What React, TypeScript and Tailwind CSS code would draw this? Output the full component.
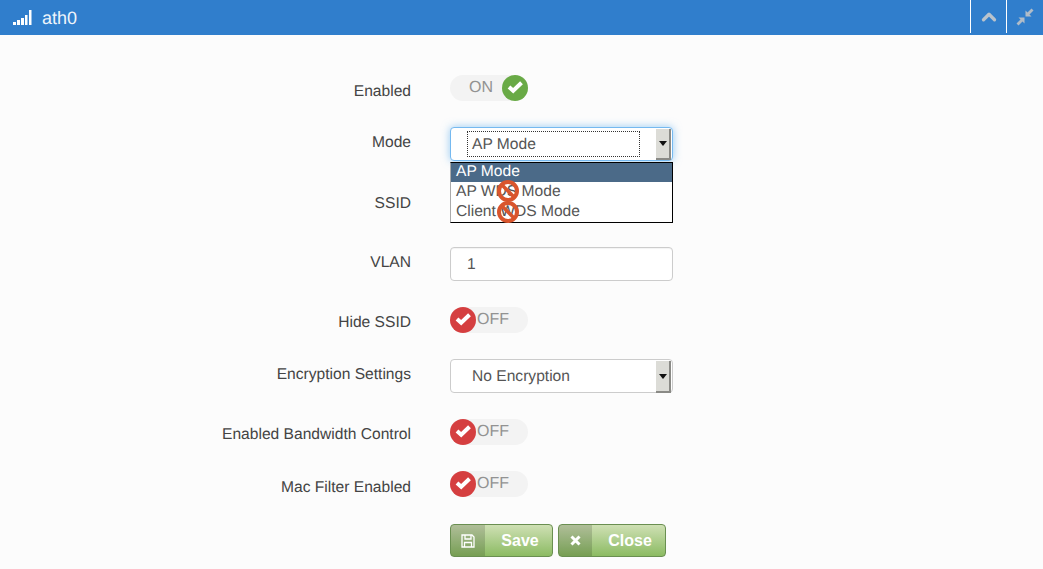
import { ChevronUp } from "lucide-react";
import type { ReactNode } from "react";

const Check = () => (
  <svg width="18" height="15" viewBox="0 0 18 15" className="-mt-[2px]">
    <path d="M3 7 L7.2 10.8 L15.5 2.8" fill="none" stroke="#fff" strokeWidth="4" strokeLinejoin="miter" />
  </svg>
);

function Toggle({ on }: { on: boolean }) {
  return (
    <div className={`flex h-[26px] w-[78px] items-center rounded-[13px] bg-[#f3f3f3] text-[16px] text-[#929292] ${on ? "justify-end" : ""}`}>
      {on ? (
        <>
          <span className="mr-[9px] -mt-px">ON</span>
          <span className="flex h-[26px] w-[26px] items-center justify-center rounded-full bg-[#69aa46]">
            <Check />
          </span>
        </>
      ) : (
        <>
          <span className="flex h-[26px] w-[26px] items-center justify-center rounded-full bg-[#d53f40]">
            <Check />
          </span>
          <span className="ml-px">OFF</span>
        </>
      )}
    </div>
  );
}

function Row({ label, labelShift, h, mb, children }: { label: string; labelShift: string; h: string; mb: string; children: ReactNode }) {
  return (
    <div className={`flex ${h} ${mb}`}>
      <div className={`w-[411px] text-right text-[15.6px] leading-[20px] text-[#444] ${labelShift}`}>{label}</div>
      <div className="ml-[39px]">{children}</div>
    </div>
  );
}

function SelectArrow({ focused }: { focused?: boolean }) {
  return (
    <div className={`absolute right-px top-px flex w-[15px] items-center justify-center border-r-2 border-b-2 border-[#8a8a86] bg-[#dcdcd7] ${focused ? "h-[31px]" : "h-[32px]"}`}>
      <svg width="8" height="5" viewBox="0 0 8 5">
        <path d="M0 0 H8 L4 5 Z" fill="#111" />
      </svg>
    </div>
  );
}

const NotAllowed = ({ top }: { top: string }) => (
  <svg width="24" height="24" viewBox="0 0 24 24" className={`absolute left-[45px] ${top}`}>
    <circle cx="12" cy="12" r="9" fill="none" stroke="#d9552d" strokeWidth="4" />
    <path d="M5.5 5.5 L18.5 18.5" stroke="#d9552d" strokeWidth="3.6" />
  </svg>
);

function GreenButton({ w, iconW, label, icon }: { w: string; iconW: string; label: string; icon: ReactNode }) {
  return (
    <button className={`flex h-[33px] ${w} overflow-hidden rounded-[4px] border border-[#6a8f51] bg-gradient-to-b from-[#cfe0b4] to-[#8cbb62] text-[16px] font-bold text-white`}>
      <span className={`flex h-full ${iconW} items-center justify-center bg-[#000]/15`}>{icon}</span>
      <span className="flex h-full flex-1 items-center justify-center pl-[3px]">{label}</span>
    </button>
  );
}

export default function App() {
  return (
    <div className="h-[569px] w-[1043px] overflow-hidden bg-[#fcfcfc] font-['Liberation_Sans',Arial,sans-serif] [text-rendering:geometricPrecision]">
      <div className="flex h-[35px] items-center bg-[#307ecc] text-white">
        <svg width="20" height="16" viewBox="0 0 20 16" className="ml-[13px] mt-px">
          <g fill="#fff">
            <rect x="0" y="12" width="3" height="3" />
            <rect x="4" y="10" width="3" height="5" />
            <rect x="8" y="8" width="3" height="7" />
            <rect x="12" y="5" width="2.5" height="10" />
            <rect x="16" y="0" width="2.5" height="15" />
          </g>
        </svg>
        <span className="ml-[9px] mt-px text-[18px] text-[#eef4fb]">ath0</span>
        <div className="ml-auto flex h-full items-start">
          <div className="flex h-[33px] w-[36px] items-center justify-center border-l border-white">
            <ChevronUp size={22} strokeWidth={3.6} color="#b9c3cc" />
          </div>
          <div className="flex h-[33px] w-[37px] items-center justify-center border-l border-white">
            <svg width="18" height="18" viewBox="0 0 18 18" fill="#b0bcc8">
              <path d="M15.5 0.5 L17.5 2.5 L13.5 6.5 L15.5 8.5 L9.5 8.5 L9.5 2.5 L11.5 4.5 Z" />
              <path d="M2.5 17.5 L0.5 15.5 L4.5 11.5 L2.5 9.5 L8.5 9.5 L8.5 15.5 L6.5 13.5 Z" />
            </svg>
          </div>
        </div>
      </div>

      <div className="relative pt-[40px]">
        <Row label="Enabled" labelShift="pt-[7px]" h="h-[26px]" mb="mb-[26px]">
          <Toggle on />
        </Row>
        <Row label="Mode" labelShift="pt-[6px]" h="h-[34px]" mb="mb-[26px]">
          <div className="relative h-[34px] w-[223px] rounded-[4px] border border-[#75b9f0] bg-white text-[15.6px] leading-[20px] text-[#555] shadow-[0_0_8px_rgba(82,168,236,0.6)]">
            <div className="ml-[16px] mt-[3px] h-[26px] w-[173px] border border-dotted border-[#333] pl-[4px] pt-[3px]">AP Mode</div>
            <SelectArrow focused />
          </div>
        </Row>
        <Row label="SSID" labelShift="pt-[7px]" h="h-[34px]" mb="mb-[26px]">
          <div className="h-[34px] w-[223px]" />
        </Row>
        <Row label="VLAN" labelShift="pt-[6px]" h="h-[34px]" mb="mb-[26px]">
          <div className="h-[34px] w-[223px] rounded-[4px] border border-[#cccccc] bg-white pl-[16px] pt-[7px] text-[15.6px] leading-[20px] text-[#555] shadow-[inset_0_1px_1px_rgba(0,0,0,0.05)]">1</div>
        </Row>
        <Row label="Hide SSID" labelShift="pt-[6px]" h="h-[26px]" mb="mb-[26px]">
          <Toggle on={false} />
        </Row>
        <Row label="Encryption Settings" labelShift="pt-[6px]" h="h-[34px]" mb="mb-[26px]">
          <div className="relative h-[34px] w-[223px] rounded-[4px] border border-[#cccccc] bg-white pl-[21px] pt-[7px] text-[15.6px] leading-[20px] text-[#555]">
            No Encryption
            <SelectArrow />
          </div>
        </Row>
        <Row label="Enabled Bandwidth Control" labelShift="pt-[6px]" h="h-[26px]" mb="mb-[26px]">
          <Toggle on={false} />
        </Row>
        <Row label="Mac Filter Enabled" labelShift="pt-[7px]" h="h-[26px]" mb="mb-[27px]">
          <Toggle on={false} />
        </Row>
        <div className="ml-[450px] flex gap-[5px]">
          <GreenButton
            w="w-[103px]"
            iconW="w-[34px]"
            label="Save"
            icon={
              <svg width="14" height="14" viewBox="0 0 14 14" fill="none" stroke="#fff" strokeWidth="1.3">
                <path d="M1 1 H11 L13 3 V13 H1 Z" />
                <path d="M4 1 V5 H10 V1 M3.5 13 V8.5 H10.5 V13" />
              </svg>
            }
          />
          <GreenButton
            w="w-[108px]"
            iconW="w-[33px]"
            label="Close"
            icon={
              <svg width="11" height="11" viewBox="0 0 11 11">
                <path d="M1.5 1.5 L9.5 9.5 M9.5 1.5 L1.5 9.5" stroke="#fff" strokeWidth="3" />
              </svg>
            }
          />
        </div>

        {/* open dropdown list */}
        <div className="absolute left-[450px] top-[127px] h-[61px] w-[223px] border border-black border-l-[#aaa] bg-white text-[15.6px] leading-[20px] text-[#555]">
          <div className="h-[19px] bg-[#4b6a88] pl-[5px] leading-[18px] text-white">AP Mode</div>
          <div className="relative h-[20px] pl-[5px] leading-[20px]">
            AP WDS Mode
            <NotAllowed top="top-[-3px]" />
          </div>
          <div className="relative h-[20px] pl-[5px] leading-[20px]">
            Client WDS Mode
            <NotAllowed top="top-[-2px]" />
          </div>
        </div>
      </div>
    </div>
  );
}
